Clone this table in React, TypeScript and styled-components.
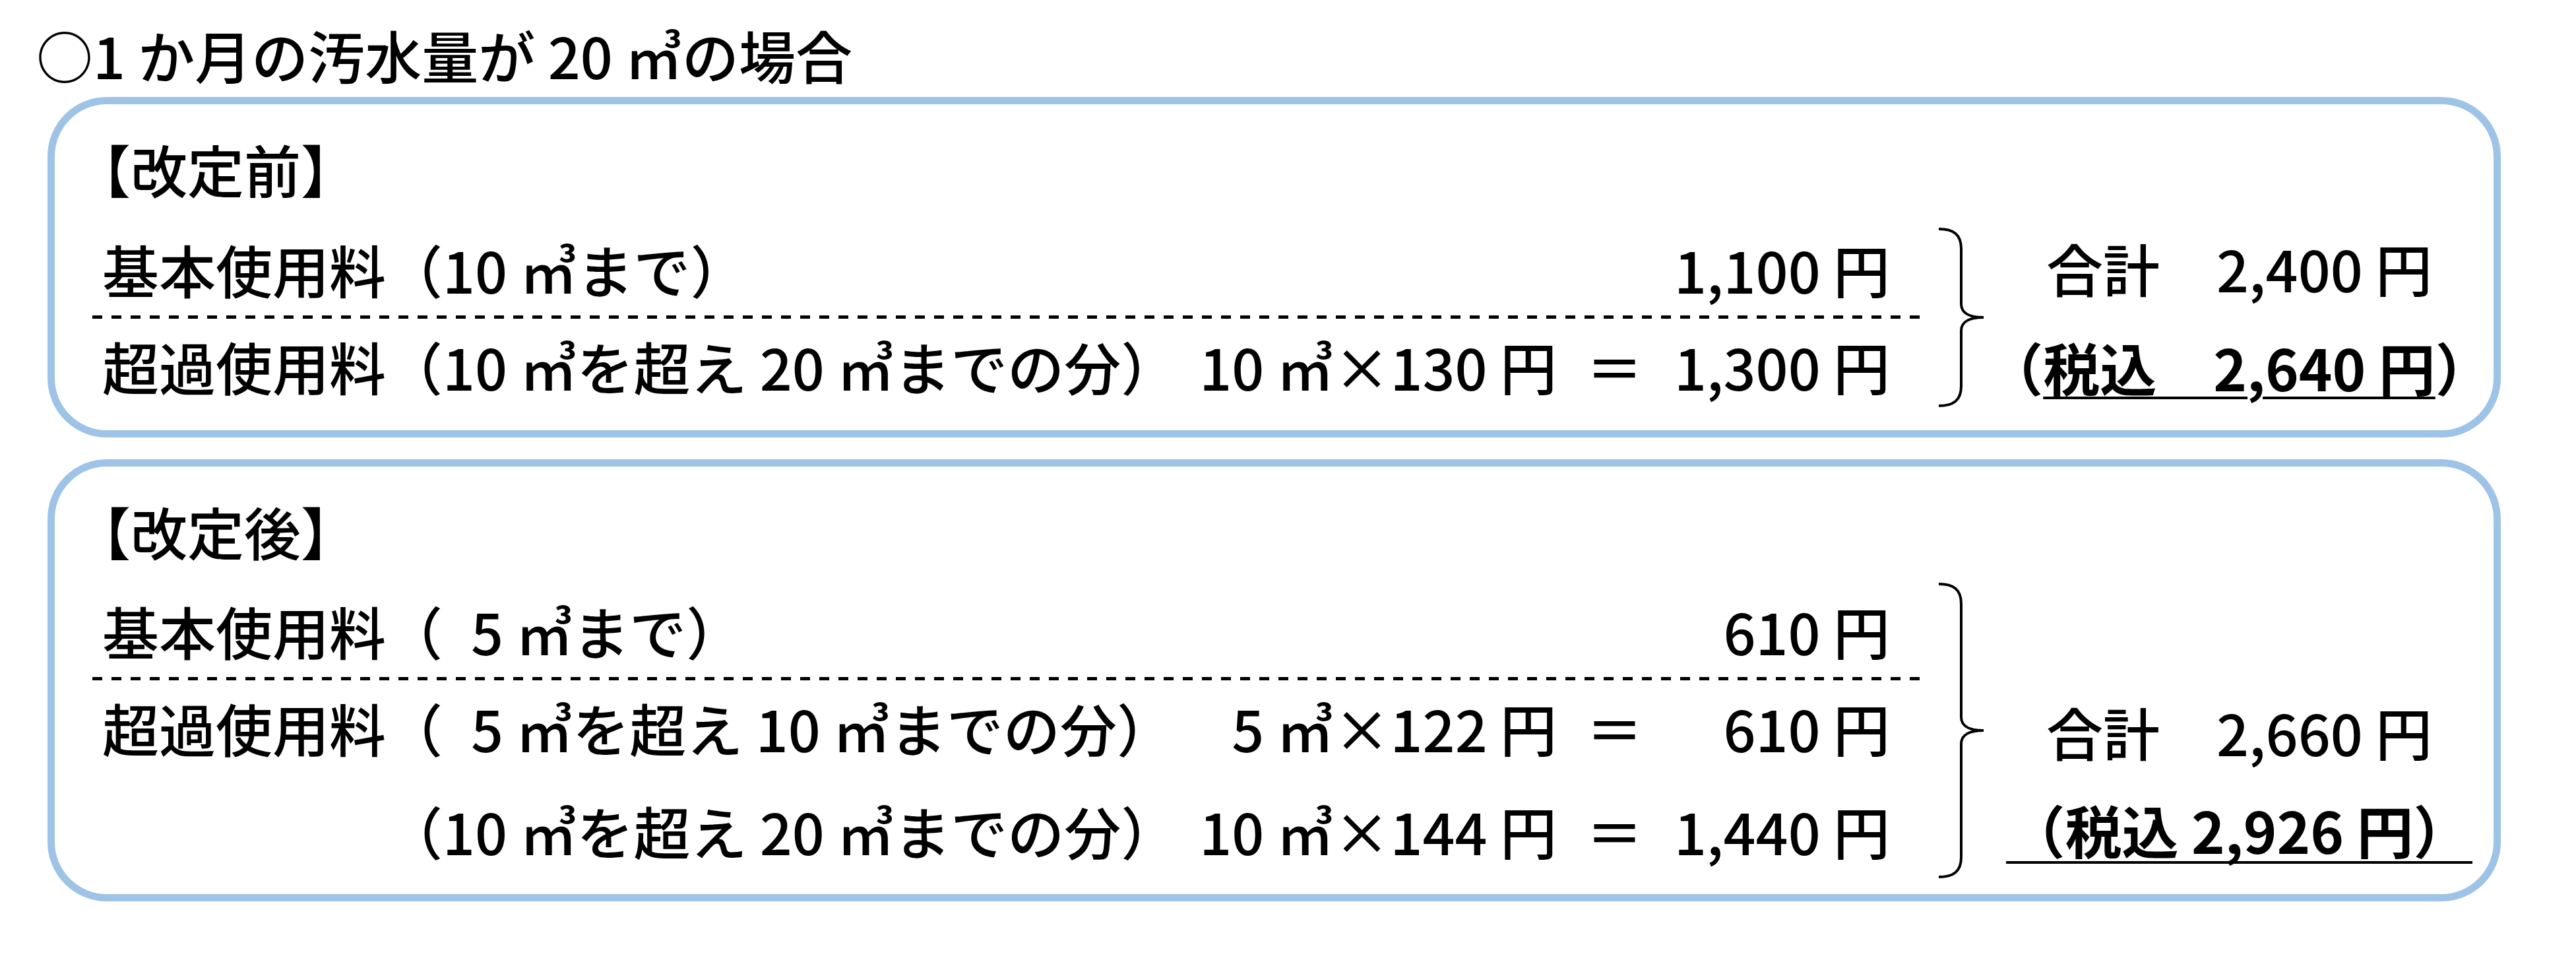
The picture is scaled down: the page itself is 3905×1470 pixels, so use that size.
import { Fragment } from 'react';
import styled, { createGlobalStyle } from 'styled-components';

type Line = { name?: string; range: string; calc?: string; amount: string };

const before: Line[] = [
  { name: '基本使用料', range: '（10 ㎥まで）', amount: '1,100 円' },
  { name: '超過使用料', range: '（10 ㎥を超え 20 ㎥までの分）', calc: '10 ㎥×130 円', amount: '1,300 円' },
];

const after: Line[] = [
  { name: '基本使用料', range: '（\u20025 ㎥まで）', amount: '610 円' },
  { name: '超過使用料', range: '（\u20025 ㎥を超え 10 ㎥までの分）', calc: '5 ㎥×122 円', amount: '610 円' },
  { range: '（10 ㎥を超え 20 ㎥までの分）', calc: '10 ㎥×144 円', amount: '1,440 円' },
];

// curly brace, drawn for a given height
const Brace = ({ height, overhang }: { height: number; overhang: number }) => {
  const m = height / 2;
  const d = `M2 2 C24 2 36 10 36 32 L36 ${m - 20} C36 ${m - 6} 50 ${m} 70 ${m} C50 ${m} 36 ${m + 6} 36 ${m + 20} L36 ${height - 32} C36 ${height - 10} 24 ${height - 2} 2 ${height - 2}`;
  return (
    <BraceSvg $overhang={overhang} width={72} height={height} viewBox={`0 0 72 ${height}`}>
      <path d={d} fill="none" stroke="#000" strokeWidth={4} />
    </BraceSvg>
  );
};

const Lines = ({ rows }: { rows: Line[] }) => (
  <LineList>
    {rows.map((r, i) => (
      <Fragment key={i}>
        <Row>
          <Cell>{r.name}</Cell>
          <Cell>{r.range}</Cell>
          <Cell $align="right">{r.calc}</Cell>
          <Cell $align="center">{r.calc ? '＝' : ''}</Cell>
          <Cell $align="right">{r.amount}</Cell>
        </Row>
        {i === 0 && <Separator />}
      </Fragment>
    ))}
  </LineList>
);

const App = () => {
  return (
    <Page>
      <GlobalStyle />
      <Title>○1 か月の汚水量が 20 ㎥の場合</Title>

      <Card>
        <Heading>【改定前】</Heading>
        <Body>
          <Lines rows={before} />
          <Brace height={272} overhang={13} />
          <Totals>
            <div>合計　2,400 円</div>
            <TaxLine>
              （<Underlined>税込　2,640 円</Underlined>）
            </TaxLine>
          </Totals>
        </Body>
      </Card>

      <Card>
        <Heading>【改定後】</Heading>
        <Body>
          <Lines rows={after} />
          <Brace height={448} overhang={22} />
          <Totals>
            <div>合計　2,660 円</div>
            <UnderBar>（税込 2,926 円）</UnderBar>
          </Totals>
        </Body>
      </Card>
    </Page>
  );
};

// Styled Components
const GlobalStyle = createGlobalStyle`
  html, body {
    margin: 0;
    padding: 0;
    background: #fff;
  }
  body {
    font-family: "Noto Sans CJK JP", "Noto Sans", sans-serif;
    color: #000;
  }
`;

const Page = styled.main`
  padding: 33px 0 0 55px;
  font-size: 86px;
  font-weight: 500;
  line-height: 100px;
  white-space: nowrap;
`;

const Title = styled.h1`
  margin: 0 0 14px;
  font-size: 86px;
  font-weight: 500;
  line-height: 100px;
`;

const Card = styled.section`
  margin-left: 17px;
  width: 3719px;
  box-sizing: border-box;
  border: 11px solid #9dc3e6;
  border-radius: 90px;
  padding: 48px 0 46px 57px;
  & + & {
    margin-top: 33px;
  }
`;

const Heading = styled.h2`
  margin: 0;
  padding-left: 15px;
  font-size: 86px;
  font-weight: 500;
  line-height: 100px;
  font-feature-settings: 'halt';
`;

const Body = styled.div`
  display: flex;
  align-items: center;
  margin-top: 50px;
`;

const LineList = styled.div`
  flex: none;
  width: 2780px;
  display: flex;
  flex-direction: column;
`;

const Row = styled.div`
  display: grid;
  grid-template-columns: 430px 1fr 560px 175px 330px;
  padding: 0 55px 0 15px;
  & + & {
    margin-top: 56px;
  }
`;

const Cell = styled.span<{ $align?: 'left' | 'right' | 'center' }>`
  text-align: ${(p) => p.$align ?? 'left'};
`;

const Separator = styled.div`
  height: 5px;
  margin: 20px 0 22px;
  background: linear-gradient(to right, #000 0 15px, transparent 15px 29px);
  background-size: 29px 5px;
  background-repeat: repeat-x;
`;

const BraceSvg = styled.svg<{ $overhang: number }>`
  flex: none;
  display: block;
  margin: -${(p) => p.$overhang}px 0 -${(p) => p.$overhang}px 17px;
`;

const Totals = styled.div`
  flex: 1;
  align-self: flex-end;
  display: flex;
  flex-direction: column;
  align-items: center;
  gap: 50px;
`;

const TaxLine = styled.div`
  font-weight: 700;
`;

const Underlined = styled.span`
  text-decoration: underline;
  text-decoration-thickness: 4px;
  text-underline-offset: 8px;
`;

const UnderBar = styled.div`
  font-weight: 700;
  line-height: 96px;
  padding: 0 4px;
  border-bottom: 4px solid #000;
`;

export default App;
